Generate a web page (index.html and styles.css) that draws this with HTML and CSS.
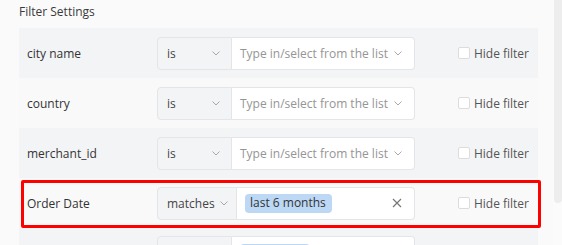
FILE: index.html
```html
<!DOCTYPE html>
<html lang="en">
<head>
    <meta charset="UTF-8">
    <meta name="viewport" content="width=device-width, initial-scale=1.0">
    <title>Filter Settings</title>
    <link rel="stylesheet" href="styles.css">
</head>
<body>
    <div class="page">
        <div class="panel">
            <h2 class="title">Filter Settings</h2>

            <div class="filter-row">
                <div class="field-name">city name</div>
                <div class="control">
                    <div class="operator">is <svg class="chevron" viewBox="0 0 8 5"><path d="M0.5 0.5 L4 4 L7.5 0.5"/></svg></div>
                    <div class="value">
                        <span class="placeholder">Type in/select from the list</span>
                        <svg class="chevron" viewBox="0 0 8 5"><path d="M0.5 0.5 L4 4 L7.5 0.5"/></svg>
                    </div>
                </div>
                <label class="hide"><span class="box"></span>Hide filter</label>
            </div>

            <div class="filter-row">
                <div class="field-name">country</div>
                <div class="control">
                    <div class="operator">is <svg class="chevron" viewBox="0 0 8 5"><path d="M0.5 0.5 L4 4 L7.5 0.5"/></svg></div>
                    <div class="value">
                        <span class="placeholder">Type in/select from the list</span>
                        <svg class="chevron" viewBox="0 0 8 5"><path d="M0.5 0.5 L4 4 L7.5 0.5"/></svg>
                    </div>
                </div>
                <label class="hide"><span class="box"></span>Hide filter</label>
            </div>

            <div class="filter-row">
                <div class="field-name">merchant_id</div>
                <div class="control">
                    <div class="operator">is <svg class="chevron" viewBox="0 0 8 5"><path d="M0.5 0.5 L4 4 L7.5 0.5"/></svg></div>
                    <div class="value">
                        <span class="placeholder">Type in/select from the list</span>
                        <svg class="chevron" viewBox="0 0 8 5"><path d="M0.5 0.5 L4 4 L7.5 0.5"/></svg>
                    </div>
                </div>
                <label class="hide"><span class="box"></span>Hide filter</label>
            </div>

            <div class="filter-row">
                <div class="field-name">Order Date</div>
                <div class="control">
                    <div class="operator wide">matches <svg class="chevron" viewBox="0 0 8 5"><path d="M0.5 0.5 L4 4 L7.5 0.5"/></svg></div>
                    <div class="value">
                        <span class="tag">last 6 months</span>
                        <svg class="clear" viewBox="0 0 10 10"><path d="M1 1 L9 9 M9 1 L1 9"/></svg>
                    </div>
                </div>
                <label class="hide"><span class="box"></span>Hide filter</label>
                <div class="highlight"></div>
            </div>

            <div class="filter-row partial">
                <div class="field-name"></div>
                <div class="control">
                    <div class="operator"></div>
                    <div class="value">
                        <span class="tag short"></span>
                    </div>
                </div>
            </div>
        </div>
        <div class="scroll-track"><div class="scroll-thumb"></div></div>
    </div>
</body>
</html>
```

FILE: styles.css
```css
body {
    margin: 0;
    background: #fafafa;
    font-family: "Open Sans", "Noto Sans", sans-serif;
    font-size: 12px;
    color: #333;
    overflow: hidden;
}
.page {
    display: flex;
    height: 245px;
    overflow: hidden;
}
.panel {
    flex: 1;
    padding: 0 15px 0 19px;
}
.title {
    margin: 0;
    height: 28px;
    line-height: 24px;
    font-size: 12px;
    font-weight: normal;
    color: #3a3a3a;
}
.filter-row {
    position: relative;
    display: flex;
    align-items: center;
    height: 50px;
    padding: 0 9px 0 8px;
    background: #f9f9fa;
    white-space: nowrap;
}
.filter-row:nth-of-type(odd) {
    background: #f3f4f6;
}
.filter-row.partial {
    align-items: flex-start;
    padding-top: 8px;
    box-sizing: border-box;
}
.field-name {
    width: 130px;
    color: #333;
}
.control {
    display: flex;
    width: 258px;
    height: 33px;
}
.operator {
    display: flex;
    align-items: center;
    justify-content: space-between;
    width: 75px;
    box-sizing: border-box;
    padding: 0 11px 0 9px;
    background: #f3f4f6;
    border: 1px solid #e3e5e8;
    border-radius: 4px 0 0 4px;
    color: #444;
}
.operator.wide {
    width: 80px;
    padding-right: 8px;
}
.value {
    flex: 1;
    display: flex;
    align-items: center;
    justify-content: space-between;
    padding: 0 12px 0 8px;
    background: #fff;
    border: 1px solid #e3e5e8;
    border-left: none;
    border-radius: 0 4px 4px 0;
}
.partial .value {
    align-items: flex-start;
    padding-top: 7px;
}
.placeholder {
    color: #959595;
}
.chevron {
    width: 8px;
    height: 5px;
    fill: none;
    stroke: #a8a8a8;
    stroke-width: 1;
}
.clear {
    width: 10px;
    height: 10px;
    fill: none;
    stroke: #777;
    stroke-width: 1.2;
}
.tag {
    display: inline-block;
    padding: 1px 6px 2px 5px;
    line-height: 16px;
    background: #bcd8f5;
    border-radius: 4px;
    color: #333;
}
.tag.short {
    width: 70px;
    height: 19px;
    padding: 0;
}
.hide {
    display: flex;
    align-items: center;
    margin-left: auto;
    color: #555;
}
.box {
    width: 10px;
    height: 10px;
    margin-right: 4px;
    background: #fff;
    border: 1px solid #dcdcdc;
    border-radius: 2px;
}
.highlight {
    position: absolute;
    left: 2px;
    right: -3px;
    top: 2px;
    bottom: 0;
    border: 3px solid #ff0000;
    border-radius: 2px;
}
.scroll-track {
    width: 9px;
    background: #fbfbfb;
}
.scroll-thumb {
    height: 203px;
    margin-left: 1px;
    background: #ededed;
    border-radius: 0 0 4px 4px;
}
```
